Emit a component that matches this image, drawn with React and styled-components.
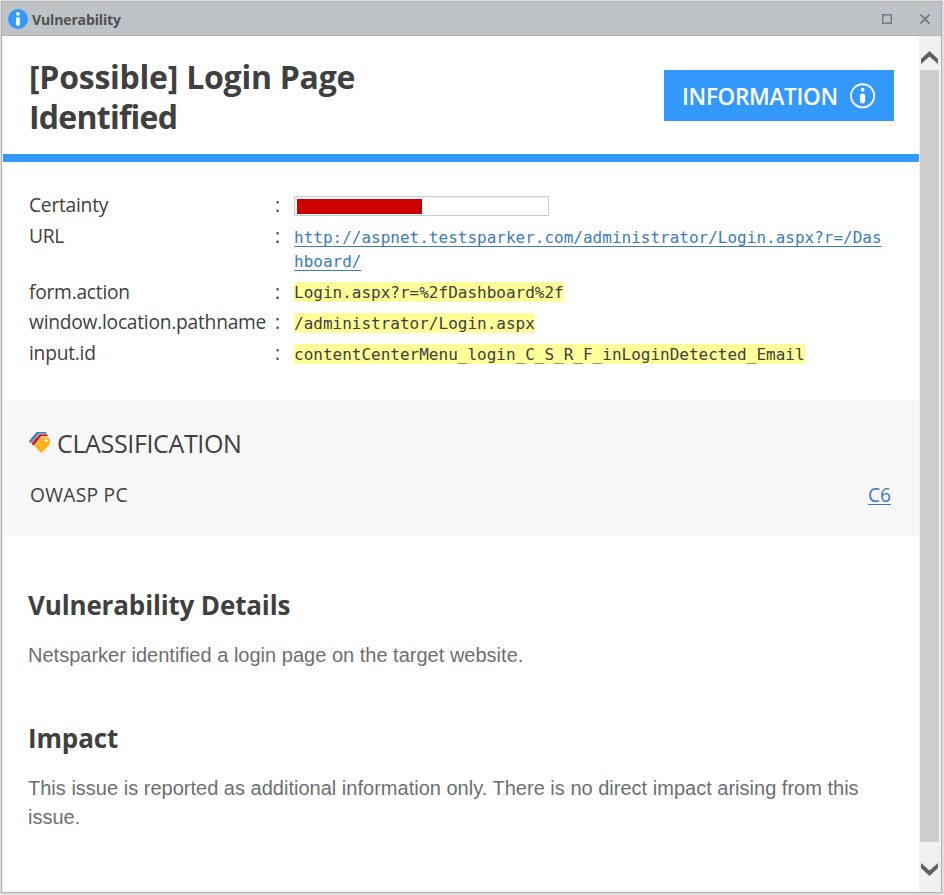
import React from 'react';
import styled, { createGlobalStyle } from 'styled-components';

const properties = [
  { label: 'Certainty', height: 31, offset: 4, type: 'bar', value: 50 },
  {
    label: 'URL',
    height: 56,
    offset: 5,
    type: 'link',
    value: 'http://aspnet.testsparker.com/administrator/Login.aspx?r=/Dashboard/',
  },
  { label: 'form.action', height: 30, offset: 5, type: 'mark', value: 'Login.aspx?r=%2fDashboard%2f' },
  { label: 'window.location.pathname', height: 31, offset: 6, type: 'mark', value: '/administrator/Login.aspx' },
  {
    label: 'input.id',
    height: 31,
    offset: 6,
    type: 'mark',
    value: 'contentCenterMenu_login_C_S_R_F_inLoginDetected_Email',
  },
];

const PropertyValue = ({ type, value }) => {
  if (type === 'bar') {
    return (
      <CertaintyBar>
        <CertaintyFill style={{ width: `${value}%` }} />
      </CertaintyBar>
    );
  }
  if (type === 'link') {
    return <UrlLink href="#">{value}</UrlLink>;
  }
  return <Mark>{value}</Mark>;
};

const App = () => {
  return (
    <>
      <GlobalStyle />
      <Window>
        <TitleBar>
          <svg width="20" height="20" viewBox="0 0 20 20">
            <circle cx="10" cy="10" r="10" fill="#3399ff" />
            <circle cx="10" cy="4.9" r="1.8" fill="#fff" />
            <rect x="8.1" y="8" width="3.8" height="9" rx="1.8" fill="#fff" />
          </svg>
          <WindowTitle>Vulnerability</WindowTitle>
          <WindowButtons>
            <svg width="10" height="10" viewBox="0 0 10 10">
              <rect x="0.75" y="0.75" width="8.5" height="8.5" fill="none" stroke="#777b7e" strokeWidth="1.5" />
            </svg>
            <svg width="10" height="10" viewBox="0 0 10 10">
              <path d="M0.5 0.5L9.5 9.5M9.5 0.5L0.5 9.5" stroke="#74787b" strokeWidth="1.7" />
            </svg>
          </WindowButtons>
        </TitleBar>

        <Body>
          <Content>
            <Header>
              <Title>
                <TitleLine $spacing={-0.25}>[Possible] Login Page </TitleLine>
                <TitleLine $spacing={-0.75}>Identified</TitleLine>
              </Title>
              <Severity>
                <SeverityText>INFORMATION</SeverityText>
                <svg width="26" height="26" viewBox="0 0 26 26">
                  <circle cx="12.6" cy="12.8" r="11.6" fill="none" stroke="#fff" strokeWidth="1.9" />
                  <circle cx="12.6" cy="6.7" r="1.9" fill="#fff" />
                  <rect x="10" y="10.6" width="5.2" height="9.8" rx="2.4" fill="#fff" />
                </svg>
              </Severity>
            </Header>

            <Properties>
              {properties.map((item) => (
                <Property key={item.label} $height={item.height}>
                  <Label>{item.label}</Label>
                  <Colon>:</Colon>
                  <Value $offset={item.offset}>
                    <PropertyValue type={item.type} value={item.value} />
                  </Value>
                </Property>
              ))}
            </Properties>

            <Classification>
              <ClassificationTitle>
                <svg width="21" height="21" viewBox="0 0 21 21">
                  <path d="M0 9.3L8 0H16.5L17.5 1.3H10L2 10.6Z" fill="#3f7fb8" stroke="#3f7fb8" strokeWidth="0.6" />
                  <path d="M2.6 11.2L10.6 2.4H17.4L18.6 4H12L4.8 13.4Z" fill="#d2141c" stroke="#d2141c" strokeWidth="0.5" />
                  <path d="M5.6 14.3L12.4 5.3H18.8L20.8 7.3V12.4L12.2 21Z" fill="#ffb017" />
                  <circle cx="17" cy="8.4" r="1.5" fill="#fff" />
                </svg>
                CLASSIFICATION
              </ClassificationTitle>
              <ClassificationRow>
                <ClassName>OWASP PC</ClassName>
                <ClassLink href="#">C6</ClassLink>
              </ClassificationRow>
            </Classification>

            <Section>
              <SectionTitle>Vulnerability Details</SectionTitle>
              <Text>Netsparker identified a login page on the target website.</Text>
            </Section>
            <Section>
              <SectionTitle>Impact</SectionTitle>
              <Text>
                This issue is reported as additional information only. There is no direct impact arising from this issue.
              </Text>
            </Section>
          </Content>

          <Scrollbar>
            <ScrollButton>
              <svg width="17" height="13" viewBox="0 0 17 13">
                <path d="M0 8L8.5 0L17 8V13L8.5 5.6L0 13Z" fill="#606060" />
              </svg>
            </ScrollButton>
            <Thumb />
            <ScrollButton $down>
              <svg width="17" height="13" viewBox="0 0 17 13">
                <path d="M0 5L8.5 13L17 5V0L8.5 7.4L0 0Z" fill="#606060" />
              </svg>
            </ScrollButton>
          </Scrollbar>
        </Body>
      </Window>
    </>
  );
};

// Styled Components
const GlobalStyle = createGlobalStyle`
  * {
    box-sizing: border-box;
  }
  body {
    margin: 0;
    background: #dfdfdf;
    color: #404040;
    font-family: 'Segoe UI', 'Open Sans', sans-serif;
    overflow: hidden;
  }
  svg {
    display: block;
    flex-shrink: 0;
  }
`;

const Window = styled.div`
  display: flex;
  flex-direction: column;
  width: 941px;
  height: 892px;
  margin: 1px;
  border: 1px solid #b0b0b0;
  background: #f5f5f5;
`;

const TitleBar = styled.div`
  display: flex;
  align-items: center;
  height: 34px;
  padding: 0 11px 0 6px;
  background: #bdc3c7;
  border-bottom: 1px solid #b0b3b5;
`;

const WindowTitle = styled.div`
  margin: 2px 0 0 4px;
  font-size: 14px;
  font-weight: 700;
  letter-spacing: -0.13px;
  color: #505050;
`;

const WindowButtons = styled.div`
  display: flex;
  gap: 28px;
  margin-left: auto;
`;

const Body = styled.div`
  display: flex;
  flex: 1;
  padding: 0 0 1px 1px;
`;

const Content = styled.div`
  width: 916px;
  background: #fff;
`;

const Header = styled.div`
  display: flex;
  justify-content: space-between;
  height: 126px;
  padding: 21px 25px 0 26px;
  border-bottom: 8px solid #3399ff;
`;

const Title = styled.h1`
  width: 380px;
  margin: 0;
  font-size: 32px;
  font-weight: 700;
  line-height: 40px;
`;

const TitleLine = styled.span`
  display: block;
  letter-spacing: ${(props) => props.$spacing}px;
`;

const Severity = styled.div`
  display: flex;
  align-items: center;
  justify-content: space-between;
  width: 230px;
  height: 51px;
  margin-top: 13px;
  padding: 0 18px;
  background: #3399ff;
  color: #fff;
`;

const SeverityText = styled.span`
  margin-top: 2px;
  font-size: 22.5px;
  font-weight: 600;
  letter-spacing: -0.3px;
`;

const Properties = styled.div`
  height: 238px;
  padding: 28px 26px 0;
`;

const Property = styled.div`
  display: flex;
  height: ${(props) => props.$height}px;
`;

const Label = styled.div`
  width: 246px;
  font-size: 19.2px;
  line-height: 30px;
  letter-spacing: -0.24px;
`;

const Colon = styled.div`
  width: 19px;
  font-size: 19.2px;
  line-height: 30px;
`;

const Value = styled.div`
  width: 590px;
  padding-top: ${(props) => props.$offset}px;
  font-family: Consolas, 'DejaVu Sans Mono', monospace;
  font-size: 16px;
  line-height: 24px;
`;

const CertaintyBar = styled.div`
  width: 255px;
  height: 20px;
  margin-top: 2px;
  padding: 2px 1px 1px 2px;
  border: 1px solid #ccc;
  box-shadow: inset 1px 1px 0 #f5f5f5;
`;

const CertaintyFill = styled.div`
  height: 15px;
  background: #cc0000;
`;

const UrlLink = styled.a`
  color: #3b7cbc;
  word-break: break-all;
  text-decoration-thickness: 1px;
  text-underline-offset: 3px;
  text-decoration-skip-ink: none;
`;

const Mark = styled.div`
  width: fit-content;
  height: 20px;
  line-height: 22px;
  background: #ffff99;
`;

const Classification = styled.div`
  height: 136px;
  padding: 25px 28px 0 26px;
  background: #f7f7f7;
`;

const ClassificationTitle = styled.div`
  display: flex;
  align-items: center;
  gap: 7px;
  height: 36px;
  font-size: 25px;
  letter-spacing: -0.35px;

  svg {
    margin-top: -2px;
  }
`;

const ClassificationRow = styled.div`
  display: flex;
  justify-content: space-between;
  margin-top: 19px;
  padding-left: 1px;
  font-size: 19.2px;
  line-height: 30px;
`;

const ClassName = styled.span`
  letter-spacing: 0.3px;
`;

const ClassLink = styled.a`
  color: #3b7cbc;
  text-decoration-thickness: 1px;
  text-underline-offset: 2px;
`;

const Section = styled.div`
  height: 133px;
  padding: 52px 26px 0 25px;
`;

const SectionTitle = styled.h2`
  margin: 0;
  font-size: 26px;
  font-weight: 700;
  line-height: 34px;
  letter-spacing: -0.15px;
`;

const Text = styled.p`
  margin: 19px 0 0;
  font-family: Arial, 'Liberation Sans', sans-serif;
  font-size: 20px;
  line-height: 29px;
  letter-spacing: 0.01px;
  color: #6b6f72;
`;

const Scrollbar = styled.div`
  display: flex;
  flex-direction: column;
  width: 22px;
  background: #f0f0f0;
`;

const ScrollButton = styled.div`
  height: ${(props) => (props.$down ? 49 : 34)}px;
  padding: ${(props) => (props.$down ? 21 : 15)}px 0 0 2px;
`;

const Thumb = styled.div`
  flex: 1;
  width: 19px;
  margin-left: 1px;
  background: #cdcdcd;
`;

export default App;
